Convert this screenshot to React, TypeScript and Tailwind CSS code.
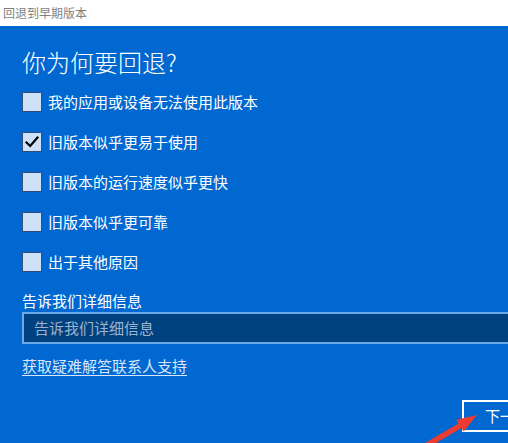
import React from "react";

const items = [
  { label: "我的应用或设备无法使用此版本", checked: false },
  { label: "旧版本似乎更易于使用", checked: true },
  { label: "旧版本的运行速度似乎更快", checked: false },
  { label: "旧版本似乎更可靠", checked: false },
  { label: "出于其他原因", checked: false },
];

const font = { fontFamily: '"Noto Sans CJK SC", "Microsoft YaHei", sans-serif' };

function Checkbox({ checked }: { checked: boolean }) {
  return (
    <div className="w-[20px] h-[20px] shrink-0 bg-[#cfe1f6] border border-[#2d4f7c] flex items-center justify-center">
      {checked && (
        <svg width="16" height="16" viewBox="0 0 16 16">
          <path d="M2.5 8.5 L6.2 12 L13.5 3.5" fill="none" stroke="#000" strokeWidth="2.2" strokeLinecap="square" />
        </svg>
      )}
    </div>
  );
}

export default function App() {
  return (
    <div className="relative w-[508px] h-[443px] overflow-hidden bg-[#0068d0]" style={font}>
      <div className="h-[26px] bg-white flex items-center pl-[3px] text-[12px] text-[#7f7f7f] w-full">
        回退到早期版本
      </div>
      <div className="w-[575px] px-[22px] pt-[18px] text-white">
        <h1 className="h-[36px] leading-[36px] text-[24px] font-light">你为何要回退?</h1>
        <div className="mt-[2px] flex flex-col">
          {items.map((it) => (
            <div key={it.label} className="h-[40px] flex items-center gap-[6px]">
              <Checkbox checked={it.checked} />
              <span className="text-[15px] leading-[20px]">{it.label}</span>
            </div>
          ))}
        </div>
        <div className="mt-[9px] text-[15px] leading-[20px]">告诉我们详细信息</div>
        <div className="mt-[1px] h-[32px] border-2 border-[#6aa8e8] bg-[#00417f] flex items-center pl-[10px] text-[15px] text-[#9db3cd]">
          告诉我们详细信息
        </div>
        <div className="mt-[12px] leading-[20px] text-[15px] text-[#d6e6fb]">
          <span className="underline underline-offset-[3px]">获取疑难解答联系人支持</span>
        </div>
        <div className="mt-[24px] flex justify-end">
          <div className="w-[91px] h-[32px] border-2 border-white flex items-center justify-center text-[15px] text-white">
            下一步
          </div>
        </div>
      </div>
      <svg className="absolute left-0 top-0 pointer-events-none" width="508" height="443" viewBox="0 0 508 443">
        <polygon
          points="477,415 463.7,431.5 461.5,428 424,450 418,447 458.5,423.5 456.3,419.7"
          fill="#ec3b30"
        />
      </svg>
    </div>
  );
}
